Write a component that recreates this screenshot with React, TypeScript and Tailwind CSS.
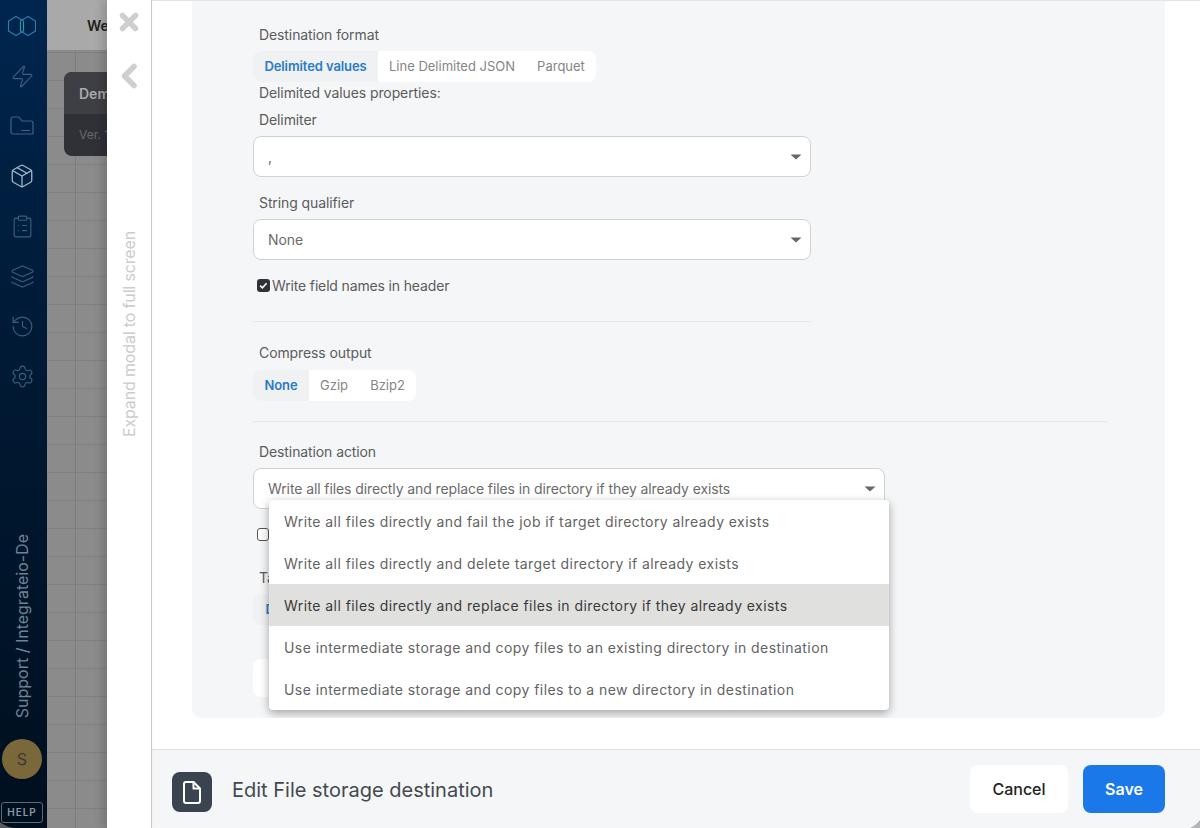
import { Zap, Package, ClipboardList, Layers, History, Settings } from 'lucide-react'

const menuItems = [
  'Write all files directly and fail the job if target directory already exists',
  'Write all files directly and delete target directory if already exists',
  'Write all files directly and replace files in directory if they already exists',
  'Use intermediate storage and copy files to an existing directory in destination',
  'Use intermediate storage and copy files to a new directory in destination',
]

function Caret() {
  return (
    <svg width="12" height="6" viewBox="0 0 12 6" className="shrink-0">
      <path d="M0.5 0.5h11L6 5.5z" fill="#666" />
    </svg>
  )
}

function Select({ value, width }: { value: string; width: string }) {
  return (
    <div className={`${width} h-[41px] flex items-center justify-between pl-[14px] pr-[8px] bg-white border border-[#cfd1d2] rounded-[8px] text-[14px] tracking-[-0.1px] text-[#6b6b6b]`}>
      <span className="-mt-[1px]">{value}</span>
      <Caret />
    </div>
  )
}

function Label({ children }: { children: string }) {
  return <div className="ml-[6px] h-[20px] leading-[20px] text-[14px] tracking-[-0.1px] text-[#5c5c5c]">{children}</div>
}

function Tabs({ items }: { items: { label: string; w: string }[] }) {
  return (
    <div className="flex w-fit h-[31px] bg-white rounded-[8px] overflow-hidden text-[13px] text-[#858585]">
      {items.map((t, i) => (
        <div key={t.label} className={`${t.w} flex items-center justify-center ${i === 0 ? 'bg-[#eff1f2] text-[#2a7cc7] font-semibold tracking-[-0.1px]' : ''}`}>
          {t.label}
        </div>
      ))}
    </div>
  )
}

function FolderIcon() {
  return (
    <svg width="24" height="20" viewBox="0 0 24 20" fill="none" stroke="#3b6485" strokeWidth="1.2" strokeLinejoin="round" strokeLinecap="round">
      <path d="M1 3a2 2 0 0 1 2-2h6l3 4h9a2 2 0 0 1 2 2v10a1 1 0 0 1-1 1H3a2 2 0 0 1-2-2z" />
      <path d="M11.5 14.5h8" />
    </svg>
  )
}

function Logo() {
  return (
    <svg width="28" height="20" viewBox="0 0 28 20" fill="none" strokeWidth="1.1" strokeLinejoin="round">
      <path d="M8 0.5l7.5 4.5v10L8 19.5 0.5 15V5z" stroke="#2f7fa8" />
      <path d="M20 0.5l7.5 4.5v10L20 19.5 12.5 15V5z" stroke="#2f7fa8" />
      <path d="M12.5 6v9M15.5 6v9" stroke="#2f9c9c" />
    </svg>
  )
}

function Sidebar() {
  const icon = 'text-[#35607f]'
  return (
    <aside className="w-[47px] h-full shrink-0 pr-[3px] flex flex-col items-center bg-gradient-to-b from-[#00264f] via-[#001a36] via-40% to-[#000f1e]">
      <div className="h-[51px] pt-[1px] flex items-center"><Logo /></div>
      <div className="flex flex-col items-center">
        <div className="h-[50px] flex items-center"><Zap size={25} strokeWidth={1.1} className={icon} /></div>
        <div className="h-[50px] flex items-center"><FolderIcon /></div>
        <div className="h-[50px] flex items-center"><Package size={26} strokeWidth={1.2} className="text-[#9db6c6]" /></div>
        <div className="h-[50px] flex items-center"><ClipboardList size={25} strokeWidth={1.1} className={icon} /></div>
        <div className="h-[50px] flex items-center"><Layers size={25} strokeWidth={1.1} className={icon} /></div>
        <div className="h-[50px] flex items-center"><History size={25} strokeWidth={1.1} className={icon} /></div>
        <div className="h-[50px] flex items-center"><Settings size={25} strokeWidth={1.1} className={icon} /></div>
      </div>
      <div className="mt-auto flex flex-col items-center">
        <div className="[writing-mode:vertical-rl] rotate-180 text-[16px] leading-[22px] text-[#6d8397] whitespace-nowrap">
          Support / Integrateio-De
        </div>
        <div className="mt-[21px] w-[40px] h-[40px] rounded-full bg-[#7a683b] flex items-center justify-center text-[16px] text-[#3b3a30]">S</div>
        <div className="mt-[23px] mb-[5px] w-[42px] h-[21px] border border-[#5d6b78] rounded-[3px] flex items-center justify-center text-[10px] font-semibold tracking-[1px] text-[#8b98a5]">HELP</div>
      </div>
    </aside>
  )
}

function Canvas() {
  return (
    <div className="w-[60px] h-full shrink-0 overflow-hidden flex flex-col bg-[#8b8b8b] bg-[linear-gradient(#7f7f7f_1px,transparent_1px),linear-gradient(90deg,#7c7c7c_1px,transparent_1px)] bg-[size:60px_28px] bg-[position:-32px_24px]">
      <div className="h-[50px] shrink-0 pl-[40px] flex items-center bg-[#a9a9a9] text-[14px] font-semibold text-[#222] whitespace-nowrap">Welcome</div>
      <div className="mt-[22px] ml-[17px] w-[200px] h-[84px] shrink-0 rounded-[8px] overflow-hidden bg-[#2f3136]">
        <div className="h-[42px] bg-[#3d3f44] pl-[15px] flex items-center text-[14px] font-semibold text-[#aaa]">Demo</div>
        <div className="h-[42px] pl-[15px] flex items-center text-[12px] text-[#66686c]">Ver. 1</div>
      </div>
    </div>
  )
}

function ModalStrip() {
  return (
    <div className="relative w-[45px] h-full shrink-0 bg-white border-r border-[#c8c8c8] shadow-[-5px_0_8px_rgba(0,0,0,0.14)] flex flex-col items-center">
      <svg width="20" height="20" viewBox="0 0 20 20" className="mt-[12px]" fill="none" stroke="#cfcfcf" strokeWidth="5.5" strokeLinecap="round">
        <path d="M3.5 3.5l13 13M16.5 3.5l-13 13" />
      </svg>
      <svg width="18" height="26" viewBox="0 0 18 26" className="mt-[31px]" fill="none" stroke="#cfcfcf" strokeWidth="5.5" strokeLinecap="round" strokeLinejoin="round">
        <path d="M14 3.5L4.5 13l9.5 9.5" />
      </svg>
      <div className="mt-[142px] [writing-mode:vertical-rl] rotate-180 text-[16px] leading-[22px] tracking-[-0.15px] text-[#cccccc] whitespace-nowrap">
        Expand modal to full screen
      </div>
    </div>
  )
}

function DestinationMenu() {
  return (
    <div className="absolute left-[16px] top-[32px] w-[620px] bg-white rounded-[4px] overflow-hidden shadow-[0_3px_10px_rgba(0,0,0,0.35)] z-10">
      {menuItems.map((item, i) => (
        <div key={item} className={`h-[42px] pl-[15px] flex items-center text-[14px] tracking-[0.43px] whitespace-nowrap ${i === 2 ? 'bg-[#e0e0df] text-[#3a3a3a]' : 'text-[#636363]'}`}>
          {item}
        </div>
      ))}
    </div>
  )
}

function FormCard() {
  return (
    <div className="ml-[40px] w-[973px] h-[717px] shrink-0 bg-[#f4f6f7] rounded-b-[10px] pl-[61px] pr-[58px] pt-[24px] overflow-hidden">
      <Label>Destination format</Label>
      <div className="mt-[6px]">
        <Tabs items={[{ label: 'Delimited values', w: 'w-[125px]' }, { label: 'Line Delimited JSON', w: 'w-[148px]' }, { label: 'Parquet', w: 'w-[70px]' }]} />
      </div>
      <div className="mt-[1px]"><Label>Delimited values properties:</Label></div>
      <div className="mt-[7px]"><Label>Delimiter</Label></div>
      <div className="mt-[6px]"><Select value="," width="w-[558px]" /></div>
      <div className="mt-[16px]"><Label>String qualifier</Label></div>
      <div className="mt-[6px]"><Select value="None" width="w-[558px]" /></div>
      <div className="mt-[15px] ml-[4px] h-[20px] flex items-center gap-[2px] text-[14px] tracking-[-0.15px] text-[#5c5c5c]">
        <span className="w-[13px] h-[13px] rounded-[3px] bg-[#2f3338] flex items-center justify-center">
          <svg width="9" height="9" viewBox="0 0 9 9" fill="none" stroke="#fff" strokeWidth="1.6"><path d="M1.2 4.6l2.2 2.2 4.2-4.6" /></svg>
        </span>
        Write field names in header
      </div>
      <div className="mt-[26px] w-[558px] h-px bg-[#e6e8e9]" />
      <div className="mt-[21px]"><Label>Compress output</Label></div>
      <div className="mt-[7px]">
        <Tabs items={[{ label: 'None', w: 'w-[56px]' }, { label: 'Gzip', w: 'w-[50px]' }, { label: 'Bzip2', w: 'w-[57px]' }]} />
      </div>
      <div className="mt-[20px] w-[854px] h-px bg-[#e6e8e9]" />
      <div className="mt-[20px]"><Label>Destination action</Label></div>
      <div className="relative mt-[6px]">
        <Select value="Write all files directly and replace files in directory if they already exists" width="w-[632px]" />
        <DestinationMenu />
        <div className="mt-[19px] ml-[4px] h-[13px] w-[12px] rounded-[3px] border border-[#555] bg-white" />
        <div className="mt-[27px]"><Label>Target</Label></div>
        <div className="mt-[6px]">
          <Tabs items={[{ label: 'Default', w: 'w-[70px]' }]} />
        </div>
        <div className="mt-[34px] w-[200px] h-[38px] bg-white rounded-[8px]" />
      </div>
    </div>
  )
}

function Footer() {
  return (
    <footer className="h-[79px] shrink-0 border-t border-[#dfe1e3] bg-[#f4f6f7] pl-[20px] pr-[35px] flex items-center">
      <div className="mt-[6px] w-[40px] h-[40px] rounded-[8px] bg-[#3a4350] flex items-center justify-center">
        <svg width="22" height="25" viewBox="0 0 22 25" fill="none" stroke="#fff" strokeWidth="2" strokeLinejoin="round">
          <path d="M4.5 2h8l6.5 6.5V21a2 2 0 0 1-2 2h-12a2 2 0 0 1-2-2V4a2 2 0 0 1 2-2z" />
          <path d="M12.5 2v6.5h6.5" />
        </svg>
      </div>
      <div className="mt-[2px] ml-[20px] text-[20px] text-[#444a50]">Edit File storage destination</div>
      <div className="ml-auto flex gap-[15px]">
        <button className="w-[98px] h-[48px] bg-white rounded-[8px] text-[16px] font-medium text-[#222]">Cancel</button>
        <button className="w-[82px] h-[48px] bg-[#1a78e8] rounded-[8px] text-[16px] font-semibold text-white">Save</button>
      </div>
    </footer>
  )
}

export default function App() {
  return (
    <div className="relative w-[1200px] h-[828px] flex overflow-hidden bg-white font-['Inter',sans-serif]">
      <Sidebar />
      <Canvas />
      <ModalStrip />
      <main className="flex-1 min-w-0 flex flex-col h-full border-t border-[#e3e3e3]">
        <div className="flex-1 min-h-0 overflow-hidden">
          <FormCard />
        </div>
        <Footer />
      </main>
      <svg width="10" height="8" viewBox="0 0 10 8" className="absolute right-0 bottom-0">
        <path d="M10 0v8H0q5-2 10-8z" fill="#b4b4b4" />
      </svg>
      <svg width="14" height="6" viewBox="0 0 14 6" className="absolute left-0 bottom-0">
        <path d="M0 0v6h14Q6 5 0 0z" fill="#5a5a5a" />
      </svg>
    </div>
  )
}
